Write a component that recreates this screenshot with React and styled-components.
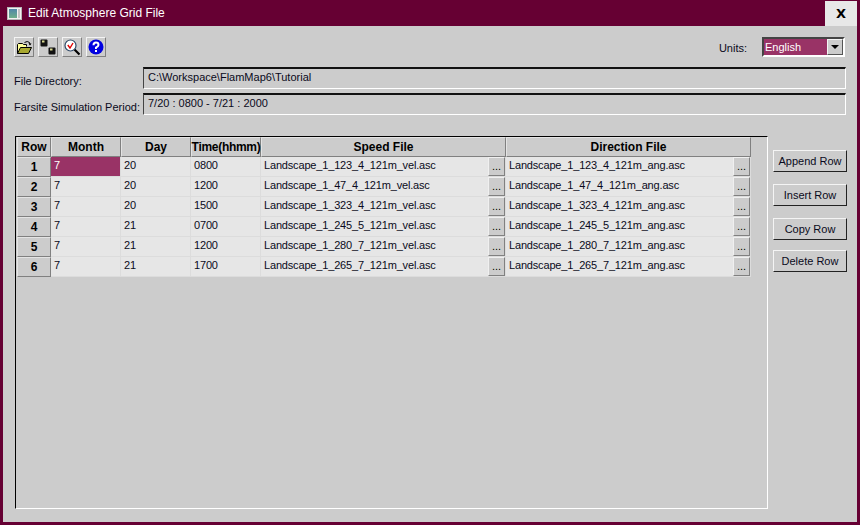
import React from 'react';
import styled, { createGlobalStyle } from 'styled-components';

const GlobalStyle = createGlobalStyle`
    html, body {
        margin: 0;
        padding: 0;
        background: #660033;
    }
    * {
        box-sizing: border-box;
    }
`;

const Window = styled.div`
    width: 860px;
    height: 525px;
    background: #660033;
    display: flex;
    flex-direction: column;
    overflow: hidden;
    font-family: 'Liberation Sans', Arial, sans-serif;
    font-size: 11px;
    color: #0a0a20;
`;

const TitleBar = styled.div`
    height: 26px;
    flex: none;
    display: flex;
    align-items: center;
    padding: 0 3px 0 7px;
`;

const TitleText = styled.div`
    margin-left: 6px;
    color: #fff;
    font-size: 12px;
    flex: 1;
`;

const CloseButton = styled.div`
    width: 32px;
    height: 25px;
    margin-top: 1px;
    background: #e8e8e8;
    color: #000;
    display: flex;
    align-items: center;
    justify-content: center;
    font-family: 'DejaVu Sans', sans-serif;
    font-weight: 700;
    font-size: 13px;
`;

const Body = styled.div`
    flex: 1;
    margin: 0 3px 3px;
    background: #cccccc;
    padding: 11px 11px 0;
    display: flex;
    flex-direction: column;
`;

const ToolRow = styled.div`
    display: flex;
    align-items: center;
    height: 20px;
`;

const ToolGroup = styled.div`
    display: flex;
    gap: 4px;
    flex: 1;
`;

const ToolButton = styled.div`
    width: 20px;
    height: 20px;
    background: #cccccc;
    border: 1px solid;
    border-color: #f4f4f4 #808080 #808080 #f4f4f4;
    display: flex;
    align-items: center;
    justify-content: center;
`;

const UnitsLabel = styled.span`
    margin: 2px 15px 0 0;
`;

const UnitsSelect = styled.div`
    width: 83px;
    height: 20px;
    margin-right: 1px;
    border: 2px solid;
    border-color: #444 #fff #fff #444;
    background: #fff;
    display: flex;
`;

const UnitsValue = styled.div`
    flex: 1;
    background: #993366;
    color: #fff;
    line-height: 17px;
    padding-left: 1px;
`;

const UnitsArrow = styled.div`
    width: 16px;
    background: #cccccc;
    border: 1px solid;
    border-color: #f4f4f4 #555 #555 #f4f4f4;
    display: flex;
    align-items: center;
    justify-content: center;
    &::after {
        content: '';
        border-style: solid;
        border-width: 4px 4px 0;
        border-color: #000 transparent transparent;
    }
`;

const Fields = styled.div`
    margin-top: 10px;
    display: flex;
    flex-direction: column;
    gap: 4px;
`;

const FieldRow = styled.div`
    display: flex;
    align-items: center;
`;

const FieldLabel = styled.div`
    width: 129px;
    margin-top: 6px;
    flex: none;
    white-space: nowrap;
`;

const FieldValue = styled.div`
    flex: 1;
    height: 22px;
    border: 1px solid;
    border-color: #111 #fff #fff #444;
    border-top-width: 2px;
    padding-left: 4px;
    line-height: 17px;
`;

const MainRow = styled.div`
    margin: 21px 0 0 1px;
    display: flex;
    align-items: flex-start;
`;

const GridPanel = styled.div`
    width: 753px;
    height: 373px;
    flex: none;
    border: 1px solid;
    border-color: #000 #fff #fff #000;
    padding: 0 0 0 1px;
`;

const Grid = styled.div`
    display: grid;
    grid-template-columns: 34px 70px 70px 70px 245px 245px;
    grid-auto-rows: 20px;
`;

const HeadCell = styled.div`
    background: #cccccc;
    border: 1px solid;
    border-color: #e4e4e4 #808080 #808080 #e4e4e4;
    color: #000;
    font-size: 12px;
    font-weight: 700;
    letter-spacing: ${(p) => p.$tight ? '-0.3px' : '0'};
    display: flex;
    align-items: center;
    justify-content: center;
    white-space: nowrap;
`;

const DataCell = styled.div`
    background: ${(p) => (p.$selected ? '#993366' : '#e6e6e6')};
    color: ${(p) => (p.$selected ? '#fff' : '#0a0a20')};
    border-right: 1px solid #dcdcdc;
    border-bottom: 1px solid #dcdcdc;
    padding-left: 3px;
    padding-bottom: 3px;
    letter-spacing: -0.17px;
    display: flex;
    align-items: center;
    justify-content: space-between;
    white-space: nowrap;
`;

const Dots = styled.div`
    width: 17px;
    height: 19px;
    align-self: flex-start;
    margin-bottom: -3px;
    background: #cccccc;
    border: 1px solid;
    border-color: #f0f0f0 #808080 #808080 #f0f0f0;
    color: #000;
    line-height: 17px;
    letter-spacing: 0;
    text-align: center;
    flex: none;
`;

const SideButtons = styled.div`
    margin: 14px 0 0 5px;
    flex: none;
    display: flex;
    flex-direction: column;
`;

const SideButton = styled.div`
    width: 74px;
    height: 22px;
    margin-bottom: ${(p) => p.$gap}px;
    background: #cccccc;
    border: 1px solid;
    border-color: #f4f4f4 #222 #222 #f4f4f4;
    display: flex;
    align-items: center;
    justify-content: center;
    padding-bottom: 1px;
`;

const rows = [
    ['7', '20', '0800', 'Landscape_1_123_4_121m_vel.asc', 'Landscape_1_123_4_121m_ang.asc'],
    ['7', '20', '1200', 'Landscape_1_47_4_121m_vel.asc', 'Landscape_1_47_4_121m_ang.asc'],
    ['7', '20', '1500', 'Landscape_1_323_4_121m_vel.asc', 'Landscape_1_323_4_121m_ang.asc'],
    ['7', '21', '0700', 'Landscape_1_245_5_121m_vel.asc', 'Landscape_1_245_5_121m_ang.asc'],
    ['7', '21', '1200', 'Landscape_1_280_7_121m_vel.asc', 'Landscape_1_280_7_121m_ang.asc'],
    ['7', '21', '1700', 'Landscape_1_265_7_121m_vel.asc', 'Landscape_1_265_7_121m_ang.asc'],
];

const AppIcon = () => (
    <svg width="15" height="13" viewBox="0 0 15 13">
        <defs>
            <linearGradient id="appPane" x1="0" y1="0" x2="0" y2="1">
                <stop offset="0" stopColor="#4f86a8" />
                <stop offset="1" stopColor="#6fb08a" />
            </linearGradient>
        </defs>
        <rect width="15" height="13" fill="#b8b8b8" />
        <rect x="1" y="1" width="13" height="11" fill="#f2f2f2" />
        <rect x="2" y="2" width="8" height="9" fill="url(#appPane)" />
        <rect x="11" y="2" width="2" height="9" fill="#c4c4c4" />
    </svg>
);

const OpenIcon = () => (
    <svg width="17" height="15" viewBox="0 0 17 15">
        <path d="M1.500 13.500V4.500l1-1h4l1 1h3v2" fill="#ffff99" stroke="#000" />
        <path d="M1.500 13.500l3-6h11l-3 6z" fill="#a8a830" stroke="#000" />
        <path d="M8.500 2.500q3-2 5 0l.5 2" fill="none" stroke="#000" />
        <path d="M12.500 3.500h3l-1.500 2z" fill="#000" />
    </svg>
);

const SaveIcon = () => (
    <svg width="16" height="16" viewBox="0 0 16 16">
        <rect x="0.500" y="0.500" width="7" height="7" rx="1" fill="#111" />
        <rect x="2" y="1.500" width="2.500" height="2" fill="#d8d890" />
        <rect x="8.500" y="8.500" width="7" height="7" rx="1" fill="#111" />
        <rect x="10" y="9.500" width="2.500" height="2" fill="#d8d890" />
    </svg>
);

const SearchIcon = () => (
    <svg width="17" height="17" viewBox="0 0 17 17">
        <line x1="10.500" y1="10.500" x2="15.500" y2="15.500" stroke="#000" strokeWidth="2.200" />
        <circle cx="6.500" cy="6.500" r="5.500" fill="#fff" stroke="#304a68" strokeWidth="1.200" />
        <path d="M3.800 6l2.200 3 3-5" fill="none" stroke="#e00000" strokeWidth="1.400" />
    </svg>
);

const HelpIcon = () => (
    <svg width="16" height="16" viewBox="0 0 16 16">
        <circle cx="8" cy="8" r="7.500" fill="#0000e0" />
        <path d="M5.500 6.200Q5.500 3.600 8 3.600t2.500 2.400Q10.500 7.300 8 8.600V10" fill="none" stroke="#fff" strokeWidth="2" />
        <rect x="7" y="11" width="2" height="2" fill="#fff" />
    </svg>
);

export default function App() {
    return (
        <>
            <GlobalStyle />
            <Window>
                <TitleBar>
                    <AppIcon />
                    <TitleText>Edit Atmosphere Grid File</TitleText>
                    <CloseButton>X</CloseButton>
                </TitleBar>
                <Body>
                    <ToolRow>
                        <ToolGroup>
                            <ToolButton><OpenIcon /></ToolButton>
                            <ToolButton><SaveIcon /></ToolButton>
                            <ToolButton><SearchIcon /></ToolButton>
                            <ToolButton><HelpIcon /></ToolButton>
                        </ToolGroup>
                        <UnitsLabel>Units:</UnitsLabel>
                        <UnitsSelect>
                            <UnitsValue>English</UnitsValue>
                            <UnitsArrow />
                        </UnitsSelect>
                    </ToolRow>
                    <Fields>
                        <FieldRow>
                            <FieldLabel>File Directory:</FieldLabel>
                            <FieldValue>C:\Workspace\FlamMap6\Tutorial</FieldValue>
                        </FieldRow>
                        <FieldRow>
                            <FieldLabel>Farsite Simulation Period:</FieldLabel>
                            <FieldValue>7/20 : 0800 - 7/21 : 2000</FieldValue>
                        </FieldRow>
                    </Fields>
                    <MainRow>
                        <GridPanel>
                            <Grid>
                                <HeadCell>Row</HeadCell>
                                <HeadCell>Month</HeadCell>
                                <HeadCell>Day</HeadCell>
                                <HeadCell $tight>Time(hhmm)</HeadCell>
                                <HeadCell>Speed File</HeadCell>
                                <HeadCell>Direction File</HeadCell>
                                {rows.map((row, index) => (
                                    <React.Fragment key={index}>
                                        <HeadCell>{index + 1}</HeadCell>
                                        <DataCell $selected={index === 0}>{row[0]}</DataCell>
                                        <DataCell>{row[1]}</DataCell>
                                        <DataCell>{row[2]}</DataCell>
                                        <DataCell>{row[3]}<Dots>...</Dots></DataCell>
                                        <DataCell>{row[4]}<Dots>...</Dots></DataCell>
                                    </React.Fragment>
                                ))}
                            </Grid>
                        </GridPanel>
                        <SideButtons>
                            <SideButton $gap={12}>Append Row</SideButton>
                            <SideButton $gap={12}>Insert Row</SideButton>
                            <SideButton $gap={10}>Copy Row</SideButton>
                            <SideButton $gap={0}>Delete Row</SideButton>
                        </SideButtons>
                    </MainRow>
                </Body>
            </Window>
        </>
    );
}
